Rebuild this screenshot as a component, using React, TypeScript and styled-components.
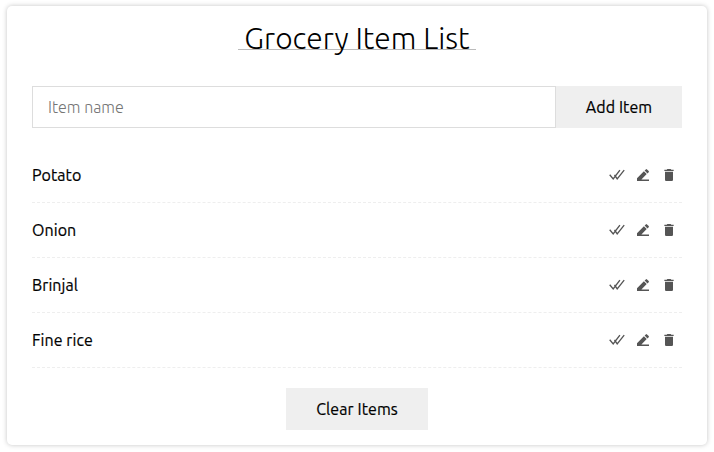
import React from "react";
import styled, { createGlobalStyle } from "styled-components";
import { MdDelete } from "react-icons/md";

const GlobalStyle = createGlobalStyle`
  * { box-sizing: border-box; }
  body { margin: 0; background: #fff; color: #000; font: 400 16px/24px Ubuntu, "Noto Sans", sans-serif; }
`;

const Card = styled.main`
  width: 700px;
  height: 439px;
  margin: 6px 7px;
  padding: 0 25px;
  border-radius: 5px;
  background: #fff;
  box-shadow: 0 0 5px #c4c4c4;
  display: flex;
  flex-direction: column;
`;

const Title = styled.h1`
  align-self: center;
  width: 238px;
  height: 44px;
  margin: 0 0 36px;
  border-bottom: 1px solid #bbb;
  display: flex;
  justify-content: center;
  white-space: nowrap;
  font: 300 30px/64px Ubuntu, "Open Sans", sans-serif;
`;

const Form = styled.form`
  display: flex;
  height: 42px;
  margin-bottom: 20px;
`;

const Field = styled.input`
  flex: 1;
  min-width: 0;
  border: 1px solid #ddd;
  border-radius: 0;
  padding: 0 15px;
  font: 300 16px/40px Ubuntu, "Open Sans", sans-serif;
  &::placeholder { color: #757575; }
`;

const Button = styled.button<{ $width: number }>`
  width: ${(p) => p.$width}px;
  height: 42px;
  padding: 0;
  border: 0;
  background: #efefef;
  color: #000;
  white-space: nowrap;
  font: 400 16px/42px Ubuntu, "Noto Sans", sans-serif;
  letter-spacing: 0.08px;
  -webkit-text-stroke: 0.2px;
`;

const List = styled.ul`
  list-style: none;
  margin: 0 0 20px;
  padding: 0;
`;

const Row = styled.li`
  display: flex;
  align-items: center;
  justify-content: space-between;
  height: 55px;
  border-bottom: 1px dashed #eee;
`;

const Name = styled.span`
  letter-spacing: 0.08px;
  -webkit-text-stroke: 0.2px;
`;

const Actions = styled.div`
  display: flex;
  gap: 10px;
  padding-right: 5px;
  color: #555;
  svg { display: block; width: 16px; height: 16px; }
`;

const Footer = styled.footer`
  display: flex;
  justify-content: center;
`;

const CheckAll = () => (
  <svg viewBox="0 0 16 16" fill="none" stroke="currentColor" strokeWidth="1.35">
    <path d="M.7 7.8 4.2 11.9 10.9 3.1M5.5 7.8 8.2 11.9 15.2 3.1" />
  </svg>
);

const Pencil = () => (
  <svg viewBox="0 0 16 16" fill="currentColor">
    <path d="M2 11.2 8.9 4.3l2.8 2.8-5.3 5.5H14V14H2zM9.6 3.6l1.2-1.2q.6-.6 1.2 0l1.7 1.7q.5.6 0 1.1l-1.2 1.2z" />
  </svg>
);

const items = ["Potato", "Onion", "Brinjal", "Fine rice"];

export default function App() {
  return (
    <>
      <GlobalStyle />
      <Card>
        <Title>Grocery Item List</Title>
        <Form>
          <Field type="text" placeholder="Item name" />
          <Button $width={126} type="button">Add Item</Button>
        </Form>
        <List>
          {items.map((item) => (
            <Row key={item}>
              <Name>{item}</Name>
              <Actions><CheckAll /><Pencil /><MdDelete /></Actions>
            </Row>
          ))}
        </List>
        <Footer>
          <Button $width={142} type="button">Clear Items</Button>
        </Footer>
      </Card>
    </>
  );
}
